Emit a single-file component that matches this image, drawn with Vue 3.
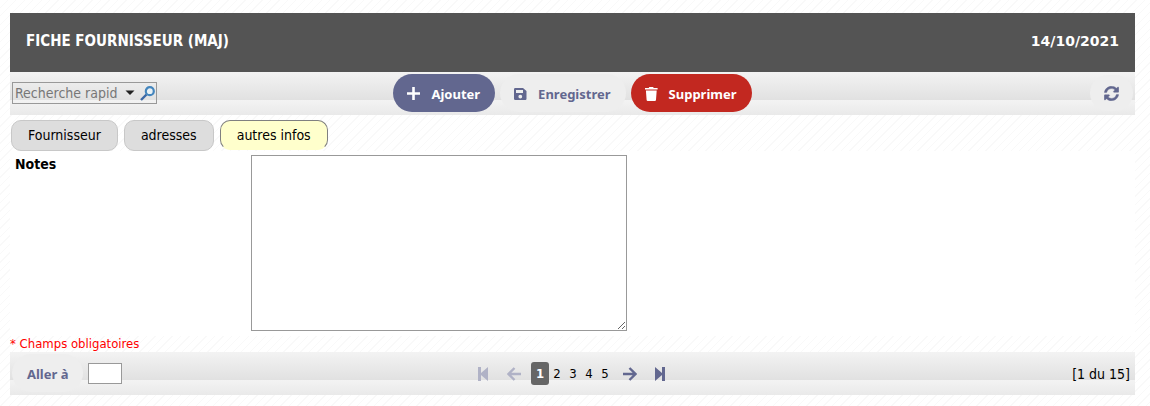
<template>
  <div class="page">
    <header class="page-header">
      <h1>FICHE FOURNISSEUR (MAJ)</h1>
      <span class="date">14/10/2021</span>
    </header>

    <div class="toolbar">
      <form class="search" @submit.prevent>
        <input v-model="search" type="text" placeholder="Recherche rapid" aria-label="Recherche rapide" />
        <button type="button" class="search-menu" aria-label="Choisir les champs">
          <svg width="10" height="6" viewBox="0 0 10 6"><path d="M.5 .5h9L5 5z" fill="#222" /></svg>
        </button>
        <button type="submit" class="search-go" aria-label="Rechercher">
          <svg width="16" height="16" viewBox="0 0 16 16" fill="none">
            <path d="M6.5 9.5L1 15" stroke="#3b68a5" stroke-width="2.4" />
            <circle cx="9.8" cy="6.2" r="4" fill="#e8f0f4" stroke="#4385bd" stroke-width="2.2" />
          </svg>
        </button>
      </form>

      <div class="actions">
        <button type="button" class="btn btn-add">
          <svg width="14" height="14" viewBox="0 0 14 14"><path d="M6.5 0v13M0 6.500h13" stroke="currentColor" stroke-width="2.6" /></svg>
          Ajouter
        </button>
        <button type="button" class="btn">
          <svg width="14" height="14" viewBox="0 0 14 14">
            <path fill="currentColor" fill-rule="evenodd" d="M1.2 1H9L12.500 4v7.800a1.200 1.200 0 0 1-1.200 1.200H1.200A1.200 1.200 0 0 1 0 11.800V2.200A1.200 1.200 0 0 1 1.200 1zM2 3v3h7V3zM6.300 7.700a1.900 1.900 0 1 0 0 3.800 1.900 1.900 0 0 0 0-3.800z" />
          </svg>
          Enregistrer
        </button>
        <button type="button" class="btn btn-delete">
          <svg width="14" height="14" viewBox="0 0 14 14">
            <path fill="currentColor" d="M0 1h3.7l.6-1h3.800l.6 1h3.900v1.500H0zM.9 3.500h10.800l-.7 9.300a1.200 1.200 0 0 1-1.200 1.200H2.800a1.200 1.200 0 0 1-1.200-1.200z" />
          </svg>
          Supprimer
        </button>
      </div>

      <button type="button" class="btn btn-reload" aria-label="Actualiser">
        <svg width="15" height="15" viewBox="0 0 512 512" fill="currentColor">
          <path stroke="currentColor" stroke-width="14" d="M370.7 133.3C339.5 104 298.9 88 255.8 88c-77.5.1-144.3 53.2-162.8 126.9-1.3 5.4-6.1 9.2-11.7 9.2H24.1c-7.5 0-13.2-6.8-11.8-14.2C33.9 94.9 134.8 8 256 8c66.4 0 126.8 26.1 171.3 68.7L463 41c15.1-15.1 41-4.4 41 17v134c0 13.3-10.7 24-24 24H346c-21.4 0-32.1-25.9-17-41zM32 296h134c21.4 0 32.1 25.9 17 41l-41.8 41.8c31.3 29.3 71.8 45.3 114.9 45.3 77.4-.1 144.3-53.1 162.8-126.8 1.3-5.4 6.1-9.2 11.7-9.2h57.3c7.5 0 13.2 6.8 11.8 14.2C478.1 417.1 377.2 504 256 504c-66.4 0-126.8-26.1-171.3-68.7L49 471c-15.1 15.1-41 4.4-41-17V320c0-13.3 10.7-24 24-24z" />
        </svg>
      </button>
    </div>

    <nav class="tabs">
      <button
        v-for="tab in tabs"
        :key="tab"
        type="button"
        class="tab"
        :class="{ active: tab === activeTab }"
        @click="activeTab = tab"
      >{{ tab }}</button>
    </nav>

    <div class="form-row">
      <label for="notes">Notes</label>
      <textarea id="notes" v-model="notes"></textarea>
    </div>

    <p class="required">* Champs obligatoires</p>

    <div class="toolbar footer">
      <div class="goto">
        <button type="button" class="btn btn-goto">Aller à</button>
        <input v-model="goTo" type="text" aria-label="Numéro de fiche" />
      </div>

      <nav class="pager">
        <button type="button" class="arrow" disabled aria-label="Première page">
          <svg width="12" height="14" viewBox="0 0 12 14"><path d="M0 0h3v6L10 0v14L3 8V14H0z" fill="currentColor" /></svg>
        </button>
        <button type="button" class="arrow arrow-prev" disabled aria-label="Page précédente">
          <svg width="14" height="14" viewBox="0 0 14 14"><path d="M7.5 1L1.5 7l6 6M1.5 7H14" fill="none" stroke="currentColor" stroke-width="2.4" /></svg>
        </button>
        <button
          v-for="n in 5"
          :key="n"
          type="button"
          class="page-number"
          :class="{ current: n === page }"
          @click="page = n"
        >{{ n }}</button>
        <button type="button" class="arrow arrow-next" aria-label="Page suivante">
          <svg width="14" height="14" viewBox="0 0 14 14"><path d="M6.5 1l6 6-6 6M12.5 7H0" fill="none" stroke="currentColor" stroke-width="2.4" /></svg>
        </button>
        <button type="button" class="arrow" aria-label="Dernière page">
          <svg width="12" height="14" viewBox="0 0 12 14"><path d="M10 0H7v6L0 0v14l7-6V14h3z" fill="currentColor" /></svg>
        </button>
      </nav>

      <span class="count">[1 du 15]</span>
    </div>
  </div>
</template>

<script setup>
import { ref } from 'vue'

const tabs = ['Fournisseur', 'adresses', 'autres infos']
const activeTab = ref('autres infos')
const search = ref('')
const notes = ref('')
const goTo = ref('')
const page = ref(1)
</script>

<style>
body {
  background: repeating-linear-gradient(135deg, #fff 0, #fff 5px, #f9f9f9 5px, #f9f9f9 6px);
}
</style>

<style scoped>
.page {
  padding: 13px 15px 11px 10px;
  font-family: "DejaVu Sans Condensed", "Noto Sans", Tahoma, sans-serif;
  font-size: 14px;
  line-height: 18px;
  color: #000;
}

button,
input,
textarea {
  box-sizing: border-box;
  margin: 0;
  padding: 0;
  font: inherit;
  color: inherit;
}

button {
  border: 0;
  background: none;
  cursor: pointer;
}

svg {
  display: block;
  flex: none;
}

.page-header {
  display: flex;
  justify-content: space-between;
  padding: 19px 16px 22px;
  background: #545454;
  color: #fff;
  font-weight: bold;
}

.page-header h1 {
  margin: 0;
  font-size: 15px;
}

.date {
  font-family: "DejaVu Sans", Verdana, sans-serif;
}

.toolbar {
  display: grid;
  grid-template-columns: 1fr auto 1fr;
  align-items: center;
  box-sizing: border-box;
  min-height: 43px;
  padding-bottom: 1px;
  background: linear-gradient(#f3f3f3, #e1e1e1) 0 0 / 100% 28px repeat-y;
}

.search {
  display: flex;
  align-items: center;
  justify-self: start;
  margin-left: 2px;
  border: 1px solid #999;
}

.search input {
  width: 108px;
  height: 20px;
  padding: 0 2px;
  border: 0;
  background: transparent;
}

.search input::placeholder {
  color: #777;
}

.search-menu {
  padding: 0 5px 0 4px;
}

.btn {
  display: flex;
  align-items: center;
  gap: 10px;
  height: 38px;
  padding: 2px 14px 0;
  border-radius: 19px;
  background: #eee;
  color: #62678f;
  font-family: "Noto Sans", sans-serif;
  font-size: 13px;
  font-weight: bold;
}

.actions {
  display: flex;
  gap: 5px;
}

.actions .btn {
  padding-right: 15px;
}

.btn-add {
  background: #62678f;
  color: #fff;
}

.btn-delete {
  background: #c22820;
  color: #fff;
}

.btn-reload {
  justify-self: end;
  height: 36px;
  margin-right: 2px;
  padding-top: 0;
}

.tabs {
  display: flex;
  gap: 6px;
  padding: 5px 1px 0;
}

.tab {
  height: 31px;
  padding: 0 16px 1px;
  border: 1px solid #c8c8c8;
  border-radius: 10px;
  background: #ddd;
}

.tab.active {
  height: 30px;
  padding-bottom: 0;
  border-color: #808080;
  border-bottom-color: #ffc;
  background: #ffc;
}

.form-row {
  display: grid;
  grid-template-columns: 236px 1fr;
  padding: 4px 5px 5px;
  background: #fff;
}

.form-row label {
  font-weight: bold;
}

.form-row textarea {
  width: 376px;
  height: 176px;
  max-width: 100%;
  border: 1px solid #999;
  background: #fff;
}

.required {
  margin: 0;
  font-size: 13px;
  line-height: 16px;
  color: #f00;
}

.goto {
  display: flex;
  align-items: center;
  gap: 5px;
  padding-left: 2px;
}

.btn-goto {
  padding: 2px 15px 0;
}

.goto input {
  width: 34px;
  height: 21px;
  border: 1px solid #999;
  background: #fff;
}

.pager {
  display: flex;
  align-items: center;
  padding-top: 1px;
  font-size: 13px;
}

.arrow {
  color: #62678f;
}

.arrow:disabled {
  color: #b0b2c6;
}

.arrow-prev {
  margin: 0 10px 0 17px;
}

.arrow-next {
  margin: 0 18px 0 10px;
}

.page-number {
  width: 16px;
  height: 23px;
}

.page-number.current {
  width: 18px;
  border-radius: 3px;
  background: #666;
  color: #fff;
  font-weight: bold;
}

.count {
  justify-self: end;
  padding: 1px 5px 0 0;
}
</style>
